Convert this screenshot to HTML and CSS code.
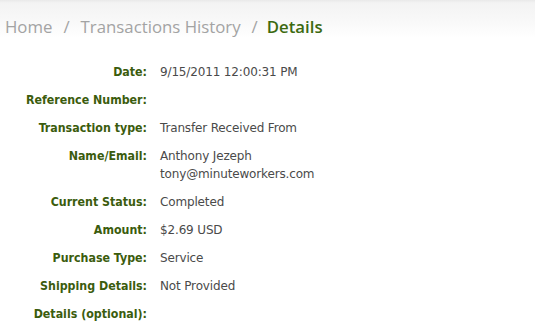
FILE: index.html
```html
<!DOCTYPE html>
<html>
<head>
<meta charset="utf-8">
<link rel="stylesheet" href="styles.css">
</head>
<body>
<div class="crumbs">
  <span class="crumb">Home</span>
  <span class="sep">/</span>
  <span class="crumb">Transactions History</span>
  <span class="sep">/</span>
  <span class="crumb current">Details</span>
</div>
<div class="details">
  <div class="label">Date:</div><div class="value">9/15/2011 12:00:31 PM</div>
  <div class="label">Reference Number:</div><div class="value"></div>
  <div class="label">Transaction type:</div><div class="value">Transfer Received From</div>
  <div class="label">Name/Email:</div><div class="value">Anthony Jezeph<br>tony@minuteworkers.com</div>
  <div class="label">Current Status:</div><div class="value">Completed</div>
  <div class="label">Amount:</div><div class="value">$2.69 USD</div>
  <div class="label">Purchase Type:</div><div class="value">Service</div>
  <div class="label">Shipping Details:</div><div class="value">Not Provided</div>
  <div class="label">Details (optional):</div><div class="value"></div>
</div>
</body>
</html>
```
FILE: styles.css
```css
html, body {
  margin: 0;
  padding: 0;
  background: #fff;
}
body {
  width: 535px;
  height: 328px;
  overflow: hidden;
}
.crumbs {
  height: 52px;
  box-sizing: border-box;
  padding: 15px 0 0 5px;
  background: linear-gradient(#e9e9e9 0px, #f3f3f3 3px, #f8f8f8 20px, #ffffff 38px);
  font-family: "Open Sans", sans-serif;
  font-size: 16.8px;
  line-height: 23px;
  color: #a3a3a3;
  display: flex;
  gap: 11px;
  white-space: nowrap;
}
.crumb.current {
  color: #3c6a10;
  font-weight: 600;
  margin-left: -2px;
}
.details {
  display: grid;
  grid-template-columns: 147px auto;
  column-gap: 13px;
  row-gap: 10px;
  padding-top: 11px;
  line-height: 18px;
}
.label {
  text-align: right;
  font-family: "DejaVu Sans Condensed", "DejaVu Sans", sans-serif;
  font-size: 12.3px;
  font-weight: bold;
  color: #3b5c0d;
  white-space: nowrap;
}
.value {
  font-family: "DejaVu Sans", sans-serif;
  font-size: 12px;
  letter-spacing: -0.15px;
  color: #4a4a4a;
  white-space: nowrap;
}
```
